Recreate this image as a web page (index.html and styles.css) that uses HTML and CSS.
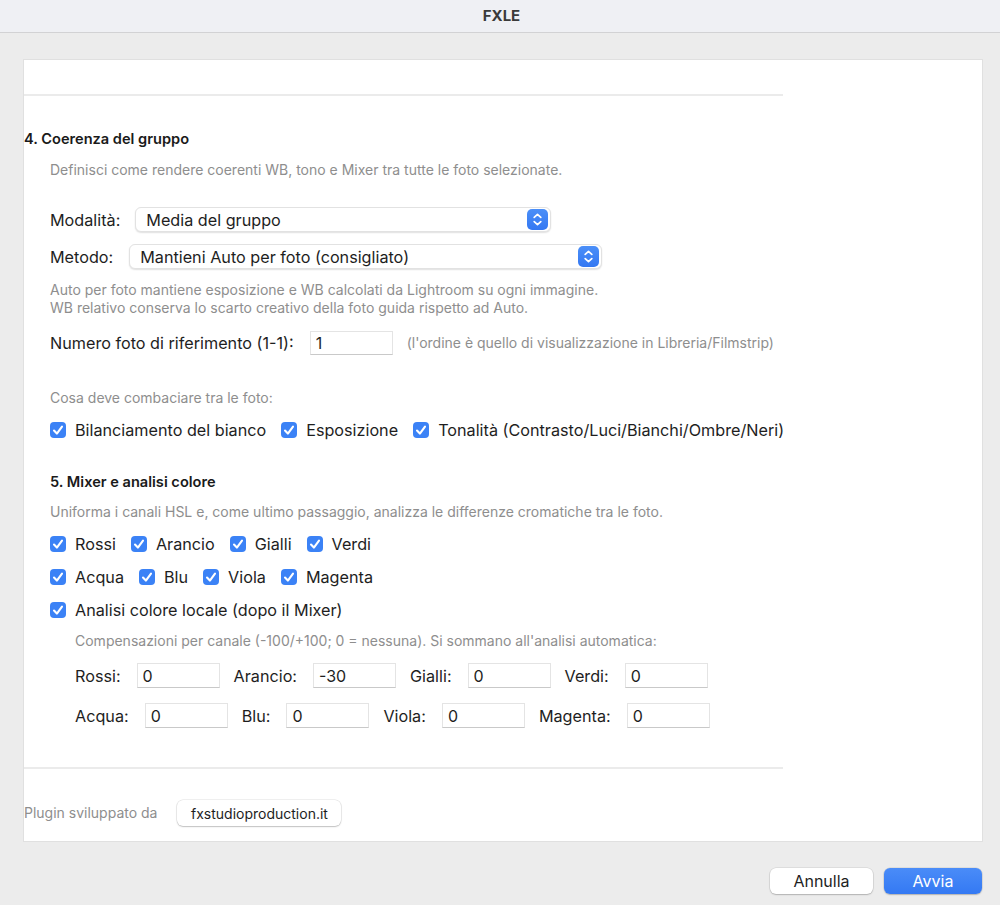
FILE: index.html
```html
<!DOCTYPE html>
<html lang="it">

<head>
    <meta charset="UTF-8">
    <meta name="viewport" content="width=device-width, initial-scale=1.0">
    <title>FXLE</title>
    <link rel="stylesheet" href="styles.css">
</head>

<body>
    <div class="titlebar">FXLE</div>

    <div class="window">
        <div class="panel">
            <div class="top_space"></div>
            <div class="sep"></div>

            <h2 class="heading flush">4. Coerenza del gruppo</h2>
            <p class="hint first">Definisci come rendere coerenti WB, tono e Mixer tra tutte le foto selezionate.</p>

            <div class="row select_row r_mode">
                <span class="label">Modalità:</span>
                <div class="select w_mode">
                    <span>Media del gruppo</span>
                    <span class="stepper">
                        <svg width="21" height="21" viewBox="0 0 21 21"><path d="M7.2 8.4 10.5 5.4 13.8 8.4M7.2 12.6 10.5 15.6 13.8 12.6" fill="none" stroke="#fff" stroke-width="1.7" stroke-linecap="round" stroke-linejoin="round"/></svg>
                    </span>
                </div>
            </div>
            <div class="row select_row r_method">
                <span class="label">Metodo:</span>
                <div class="select w_method">
                    <span>Mantieni Auto per foto (consigliato)</span>
                    <span class="stepper">
                        <svg width="21" height="21" viewBox="0 0 21 21"><path d="M7.2 8.4 10.5 5.4 13.8 8.4M7.2 12.6 10.5 15.6 13.8 12.6" fill="none" stroke="#fff" stroke-width="1.7" stroke-linecap="round" stroke-linejoin="round"/></svg>
                    </span>
                </div>
            </div>
            <p class="hint r_auto">Auto per foto mantiene esposizione e WB calcolati da Lightroom su ogni immagine.<br>WB relativo conserva lo scarto creativo della foto guida rispetto ad Auto.</p>

            <div class="row r_ref">
                <span class="label">Numero foto di riferimento (1-1):</span>
                <input class="field" value="1">
                <span class="hint small">(l'ordine è quello di visualizzazione in Libreria/Filmstrip)</span>
            </div>

            <p class="hint r_match">Cosa deve combaciare tra le foto:</p>
            <div class="row checks r_checks">
                <label class="check"><span class="box"></span>Bilanciamento del bianco</label>
                <label class="check"><span class="box"></span>Esposizione</label>
                <label class="check"><span class="box"></span>Tonalità (Contrasto/Luci/Bianchi/Ombre/Neri)</label>
            </div>

            <h2 class="heading r_mixer">5. Mixer e analisi colore</h2>
            <p class="hint r_uni">Uniforma i canali HSL e, come ultimo passaggio, analizza le differenze cromatiche tra le foto.</p>
            <div class="row checks r_c1">
                <label class="check"><span class="box"></span>Rossi</label>
                <label class="check"><span class="box"></span>Arancio</label>
                <label class="check"><span class="box"></span>Gialli</label>
                <label class="check"><span class="box"></span>Verdi</label>
            </div>
            <div class="row checks r_c2">
                <label class="check"><span class="box"></span>Acqua</label>
                <label class="check"><span class="box"></span>Blu</label>
                <label class="check"><span class="box"></span>Viola</label>
                <label class="check"><span class="box"></span>Magenta</label>
            </div>
            <div class="row checks r_c3">
                <label class="check"><span class="box"></span>Analisi colore locale (dopo il Mixer)</label>
            </div>

            <p class="hint indent r_comp">Compensazioni per canale (-100/+100; 0 = nessuna). Si sommano all'analisi automatica:</p>
            <div class="row comp indent r_in1">
                <span class="label">Rossi:</span><input class="field" value="0">
                <span class="label">Arancio:</span><input class="field" value="-30">
                <span class="label">Gialli:</span><input class="field" value="0">
                <span class="label">Verdi:</span><input class="field" value="0">
            </div>
            <div class="row comp indent r_in2">
                <span class="label">Acqua:</span><input class="field" value="0">
                <span class="label">Blu:</span><input class="field" value="0">
                <span class="label">Viola:</span><input class="field" value="0">
                <span class="label">Magenta:</span><input class="field" value="0">
            </div>

            <div class="sep r_sep2"></div>

            <div class="footer">
                <span class="hint">Plugin sviluppato da</span>
                <button class="btn link">fxstudioproduction.it</button>
            </div>
        </div>

        <div class="actions">
            <button class="btn cancel">Annulla</button>
            <button class="btn primary">Avvia</button>
        </div>
    </div>
</body>

</html>
```
FILE: styles.css
```css
* {
    margin: 0;
    padding: 0;
    box-sizing: border-box;
}

body {
    width: 1000px;
    height: 905px;
    background-color: #ececec;
    font-family: Inter, "Liberation Sans", sans-serif;
    color: #1e1e1e;
    overflow: hidden;
}

.titlebar {
    height: 33px;
    line-height: 31px;
    background-color: #eff0f4;
    border-bottom: 1px solid #d2d2d4;
    text-align: center;
    font-size: 15px;
    font-weight: 700;
    color: #3a3a3a;
    padding-left: 3px;
}

.window {
    padding: 26px 17px 0 23px;
}

.panel {
    background-color: #fff;
    border: 1px solid #e0e0e0;
    height: 783px;
    padding-bottom: 15px;
}

.top_space {
    height: 34px;
}

.sep {
    width: 759px;
    height: 2px;
    background-color: #ebebeb;
}

.heading {
    font-size: 14.6px;
    font-weight: 600;
    line-height: 20px;
    color: #1a1a1a;
    padding-left: 26px;
}

.heading.flush {
    padding-left: 0;
    margin-top: 33px;
}

.hint {
    font-size: 14px;
    line-height: 18px;
    color: #8e8e8e;
    padding-left: 26px;
}

.hint.small {
    padding-left: 0;
}

.indent {
    padding-left: 51px;
}

.first {
    margin-top: 12px;
}

.row {
    display: flex;
    align-items: center;
    padding-left: 26px;
}

.row.indent {
    padding-left: 51px;
}

.label {
    font-size: 16.2px;
    line-height: 22px;
    color: #1e1e1e;
}

/* popup menus */
.select_row .label {
    margin-right: 15px;
}

.select {
    height: 25px;
    display: flex;
    align-items: center;
    justify-content: space-between;
    padding: 0 2px 0 10px;
    background-color: #fff;
    border: 1px solid #e2e2e2;
    border-radius: 6px;
    box-shadow: 0 1px 1.5px rgba(0, 0, 0, 0.12);
    font-size: 16.2px;
}

.w_mode {
    width: 416px;
}

.w_method {
    width: 473px;
    padding-left: 10px;
}

.r_method .label {
    margin-right: 16px;
}

.stepper {
    width: 21px;
    height: 21px;
    border-radius: 5px;
    background: linear-gradient(#4b8ff8, #3478f2);
    display: flex;
}

.r_mode {
    margin-top: 28px;
}

.r_method {
    margin-top: 12px;
}

.r_auto {
    margin-top: 12px;
}

/* text fields */
.field {
    width: 83px;
    height: 25px;
    border: 1px solid #e4e4e4;
    border-bottom-color: #c9c9c9;
    padding: 0 5px;
    font-family: Inter, "Liberation Sans", sans-serif;
    font-size: 16px;
    color: #1e1e1e;
    outline: none;
    background: #fff;
}

.r_ref {
    margin-top: 14px;
}

.r_ref .field {
    height: 24px;
    margin: 0 14px 0 16px;
}

.r_match {
    margin-top: 34px;
}

/* checkboxes */
.checks {
    gap: 15px;
}

.check {
    display: flex;
    align-items: center;
    gap: 9px;
    font-size: 16.2px;
    line-height: 22px;
}

.box {
    width: 16px;
    height: 16px;
    border-radius: 4px;
    background-color: #3b82f6;
    background-image: url("data:image/svg+xml,%3Csvg xmlns='http://www.w3.org/2000/svg' viewBox='0 0 16 16'%3E%3Cpath d='M4 8.6 6.9 11.6 12 4.6' fill='none' stroke='white' stroke-width='2.1' stroke-linecap='round' stroke-linejoin='round'/%3E%3C/svg%3E");
}

.r_checks {
    margin-top: 12px;
}

.r_mixer {
    margin-top: 31px;
}

.r_uni {
    margin-top: 11px;
}

.r_c1 {
    margin-top: 12px;
}

.r_c2,
.r_c3 {
    margin-top: 11px;
}

.r_comp {
    margin-top: 11px;
}

.comp .field {
    margin: 0 14px 0 16px;
}

.r_in1 {
    margin-top: 13px;
}

.r_in2 {
    margin-top: 15px;
}

.r_sep2 {
    margin-top: 39px;
}

.footer {
    display: flex;
    align-items: center;
    margin-top: 31px;
}

.footer .hint {
    padding-left: 0;
    margin-right: 20px;
}

/* buttons */
.btn {
    height: 26px;
    border: none;
    border-radius: 6px;
    background-color: #fff;
    box-shadow: 0 0 0 0.5px rgba(0, 0, 0, 0.12), 0 1px 1.5px rgba(0, 0, 0, 0.2);
    font-family: Inter, "Liberation Sans", sans-serif;
    color: #1e1e1e;
}

.link {
    width: 164px;
    font-size: 14px;
}

.actions {
    display: flex;
    justify-content: flex-end;
    gap: 11px;
    margin-top: 26px;
    padding-right: 1px;
}

.cancel {
    width: 103px;
    font-size: 16px;
}

.primary {
    width: 98px;
    font-size: 16px;
    color: #fff;
    background: linear-gradient(#4a8cf8, #3479f3);
}
```
